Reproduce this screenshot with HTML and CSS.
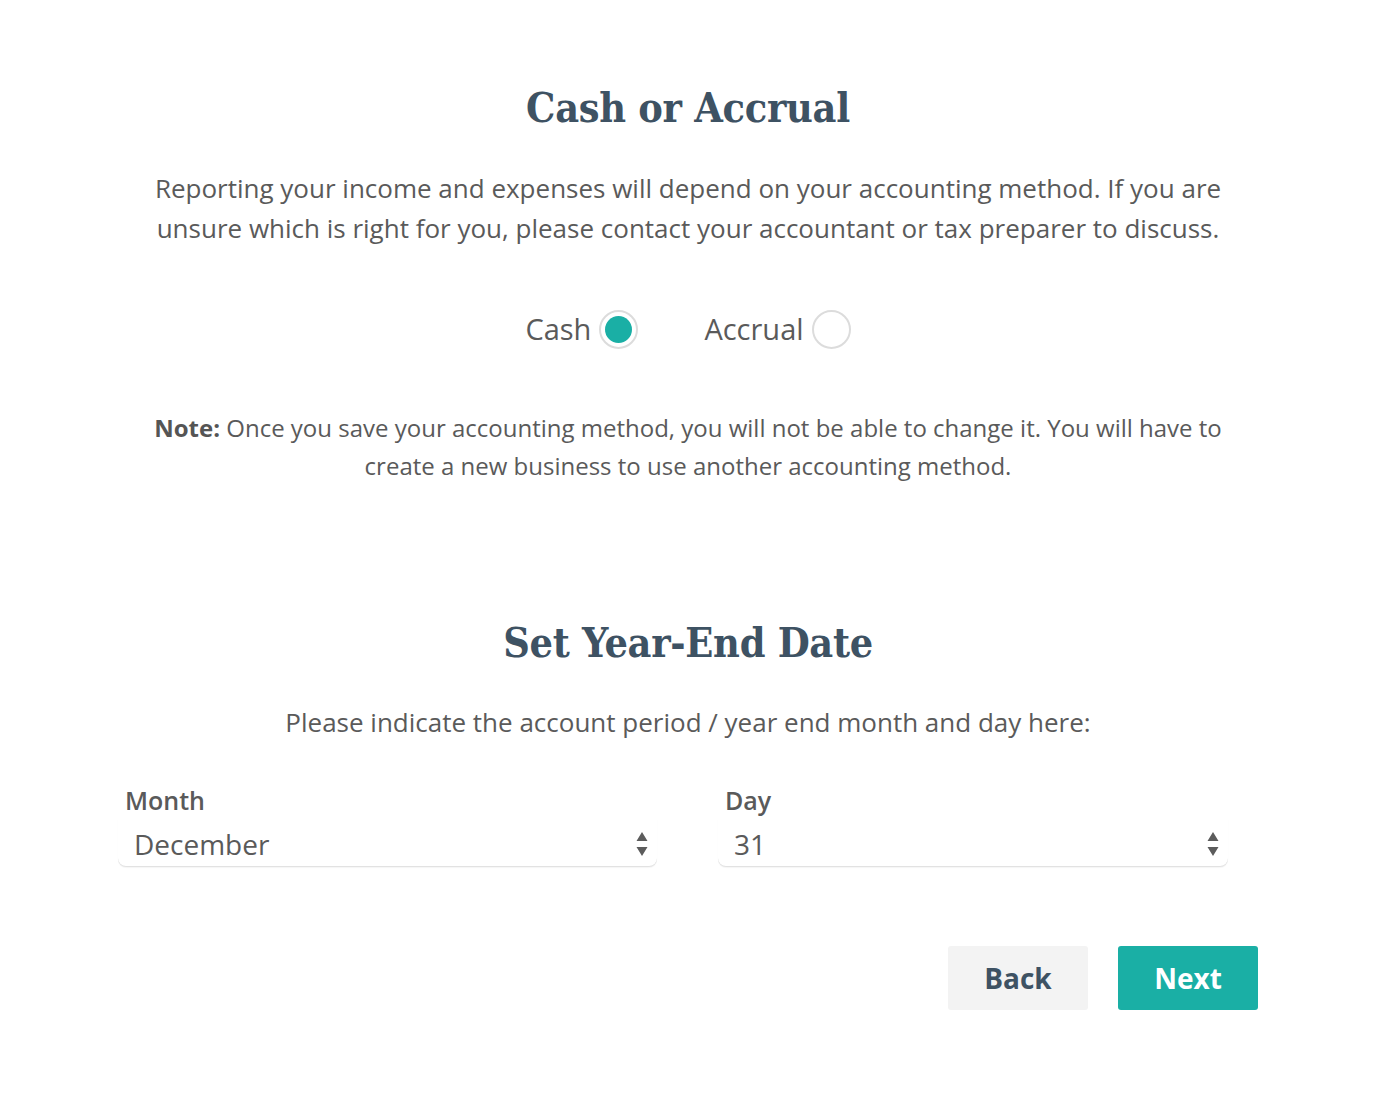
FILE: index.html
```html
<!DOCTYPE html>
<html lang="en">
<head>
	<meta http-equiv="Content-Type" content="text/html; charset=UTF-8">
	<meta name="viewport" content="width=device-width, initial-scale=1">
	<title>Cash or Accrual</title>
	<link rel="stylesheet" href="styles.css">
</head>
<body>
<main class="setup">
  <section class="method">
    <h2 class="title">Cash or Accrual</h2>
    <p class="lead">Reporting your income and expenses will depend on your accounting method. If you are unsure which is right for you, please contact your accountant or tax preparer to discuss.</p>
    <div class="choices">
      <label class="choice">Cash <span class="dot is-on"></span></label>
      <label class="choice">Accrual <span class="dot"></span></label>
    </div>
    <p class="note"><b>Note:</b> Once you save your accounting method, you will not be able to change it. You will have to create a new business to use another accounting method.</p>
  </section>

  <section class="year-end">
    <h2 class="title">Set Year-End Date</h2>
    <p class="lead">Please indicate the account period / year end month and day here:</p>
    <div class="fields">
      <div class="field field-month">
        <span class="field-label">Month</span>
        <div class="select">
          <span>December</span>
          <svg class="arrows" width="12" height="26" viewBox="0 0 12 26"><path d="M6 1 L11.5 10 H0.5 Z M0.5 16 H11.5 L6 25 Z" fill="#5c5c5c"/></svg>
        </div>
      </div>
      <div class="field field-day">
        <span class="field-label">Day</span>
        <div class="select">
          <span>31</span>
          <svg class="arrows" width="12" height="26" viewBox="0 0 12 26"><path d="M6 1 L11.5 10 H0.5 Z M0.5 16 H11.5 L6 25 Z" fill="#5c5c5c"/></svg>
        </div>
      </div>
    </div>
  </section>

  <div class="actions">
    <button class="btn btn-back">Back</button>
    <button class="btn btn-next">Next</button>
  </div>
</main>
</body>
</html>
```

FILE: styles.css
```css
html,
body {
  width: 100%;
  height: 100%;
}
body {
  margin: 0;
  padding-right: 6px;
  box-sizing: border-box;
  background: #fff;
  font-family: "Open Sans", "Noto Sans", sans-serif;
  color: #5a5a5a;
}
.setup {
  width: 1140px;
  margin: 0 auto;
  padding-top: 84px;
}
.title {
  margin: 0;
  text-align: center;
  font-family: "DejaVu Serif Condensed", "DejaVu Serif", "Liberation Serif", serif;
  font-stretch: semi-condensed;
  font-weight: bold;
  font-size: 41px;
  line-height: 48px;
  letter-spacing: -0.3px;
  color: #3e5263;
}
.lead {
  margin: 0;
  text-align: center;
  font-size: 26px;
  line-height: 40px;
}
.method .lead {
  margin-top: 36px;
}
.choices {
  display: flex;
  justify-content: center;
  gap: 66px;
  margin-top: 60px;
}
.choice {
  display: flex;
  align-items: center;
  gap: 8px;
  font-size: 29px;
  line-height: 42px;
  color: #5a5a5a;
}
.dot {
  width: 35px;
  height: 35px;
  border: 2px solid #dcdcdc;
  border-radius: 50%;
  box-sizing: content-box;
  display: inline-block;
  position: relative;
}
.dot.is-on::after {
  content: "";
  position: absolute;
  left: 4px;
  top: 4px;
  width: 27px;
  height: 27px;
  border-radius: 50%;
  background: #1aafa5;
}
.note {
  margin: 59px 0 0;
  text-align: center;
  font-size: 24px;
  line-height: 38px;
}
.note b {
  font-weight: 700;
  color: #555;
}
.year-end {
  margin-top: 134px;
}
.year-end .lead {
  margin-top: 35px;
}
.fields {
  display: flex;
  gap: 61px;
  margin-top: 41px;
}
.field {
  display: flex;
  flex-direction: column;
}
.field-month {
  width: 539px;
}
.field-day {
  width: 510px;
}
.field-label {
  padding-left: 7px;
  font-size: 25px;
  font-weight: 600;
  line-height: 34px;
  color: #5a5a5a;
}
.select {
  display: flex;
  align-items: center;
  justify-content: space-between;
  box-sizing: border-box;
  height: 49px;
  padding: 4px 9px 0 16px;
  border-radius: 0 0 8px 8px;
  box-shadow: 0 1px 0 #e2e2e2, 0 2px 1px rgba(0, 0, 0, 0.04);
  font-size: 28px;
  color: #5a5a5a;
}
.actions {
  display: flex;
  justify-content: flex-end;
  gap: 30px;
  margin-top: 80px;
}
.btn {
  width: 140px;
  height: 64px;
  border: none;
  border-radius: 3px;
  font-family: "Open Sans", sans-serif;
  font-size: 28px;
  font-weight: 700;
}
.btn-back {
  background: #f3f3f3;
  color: #3e5263;
}
.btn-next {
  background: #1aafa5;
  color: #fff;
}
```
